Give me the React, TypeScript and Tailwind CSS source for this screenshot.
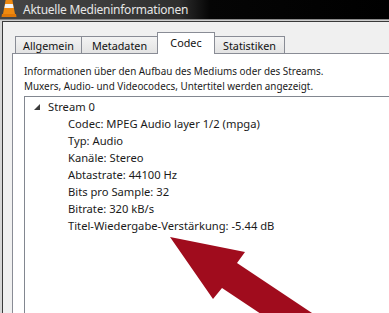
import React from "react";

const font = { fontFamily: '"Noto Sans", "Segoe UI", sans-serif' };

function Tab({ label, selected, w }: { label: string; selected?: boolean; w: string }) {
  if (selected) {
    return (
      <div
        className={`relative z-10 -ml-px h-[22px] ${w} border border-b-0 border-[#898c95] bg-white flex items-start justify-center pt-[2px] text-[10.8px] leading-[16px] text-[#111]`}
      >
        {label}
      </div>
    );
  }
  return (
    <div
      className={`-ml-px h-[18px] ${w} border border-[#898c95] bg-gradient-to-b from-[#f3f3f3] to-[#e3e3e3] flex items-start justify-center pt-[1px] text-[10.8px] leading-[16px] text-[#111]`}
    >
      {label}
    </div>
  );
}

export default function App() {
  const rows = [
    "Codec: MPEG Audio layer 1/2 (mpga)",
    "Typ: Audio",
    "Kanäle: Stereo",
    "Abtastrate: 44100 Hz",
    "Bits pro Sample: 32",
    "Bitrate: 320 kB/s",
    "Titel-Wiedergabe-Verstärkung: -5.44 dB",
  ];
  return (
    <div className="relative w-[389px] h-[313px] overflow-hidden bg-[#d6d6d6]" style={font}>
      {/* title bar */}
      <div className="h-[19px] flex items-center bg-[linear-gradient(to_right,#454545_0%,#3a3a3a_30%,#2e2e2e_46%,#050505_54%,#000_100%)]">
        <svg width="16" height="19" viewBox="0 0 16 19" className="ml-[1px] shrink-0">
          <polygon points="5,-2 11,-2 14,14 2,14" fill="#f08a10" />
          <polygon points="4.2,4 11.8,4 12.6,8 3.4,8" fill="#f4f4f4" />
          <polygon points="1,14 15,14 15.5,17 0.5,17" fill="#e07808" />
        </svg>
        <span className="ml-[6px] text-[12px] tracking-[-0.25px] leading-[19px] text-[#e6e6e6] -mt-[1px]">
          Aktuelle Medieninformationen
        </span>
      </div>
      <div className="h-[2px] bg-[#cfcfcf] border-t border-[#8a8a8a]" />
      {/* client */}
      <div className="ml-[2px] h-[292px] border-l border-t border-[#3a3a3a] bg-[#f0f0f0] pt-[10px] overflow-hidden">
        <div className="ml-[13px] flex items-end h-[22px] -mb-px">
          <Tab label="Allgemein" w="w-[67px]" />
          <Tab label="Metadaten" w="w-[77px]" />
          <Tab label="Codec" w="w-[58px]" selected />
          <Tab label="Statistiken" w="w-[71px]" />
        </div>
        <div className="ml-[9px] h-[300px] border-l border-t border-[#898c95] bg-white pl-[11px] pt-[10px] text-[#1a1a1a]">
          <div className="text-[9.9px] leading-[15px] whitespace-nowrap">
            Informationen über den Aufbau des Mediums oder des Streams.
          </div>
          <div className="text-[9.9px] leading-[15px] whitespace-nowrap">
            Muxers, Audio- und Videocodecs, Untertitel werden angezeigt.
          </div>
          <div className="mt-[2px] h-[300px] border-l border-t border-[#828790] pt-[1px] text-[11.2px] leading-[17px]">
            <div className="flex items-center">
              <svg width="6" height="6" viewBox="0 0 6 6" className="ml-[9px] mr-[8px]">
                <polygon points="6,0 6,6 0,6" fill="#3c3c3c" />
              </svg>
              <span>Stream 0</span>
            </div>
            {rows.map((r) => (
              <div key={r} className="pl-[43px] whitespace-nowrap">
                {r}
              </div>
            ))}
          </div>
        </div>
      </div>
      {/* red arrow overlay */}
      <svg className="absolute left-0 top-0 pointer-events-none" width="389" height="313" viewBox="0 0 389 313">
        <polygon
          points="170,237 245,252 237,263 330,325 285,330 222,288 213,299"
          fill="#a00c1d"
        />
      </svg>
    </div>
  );
}
